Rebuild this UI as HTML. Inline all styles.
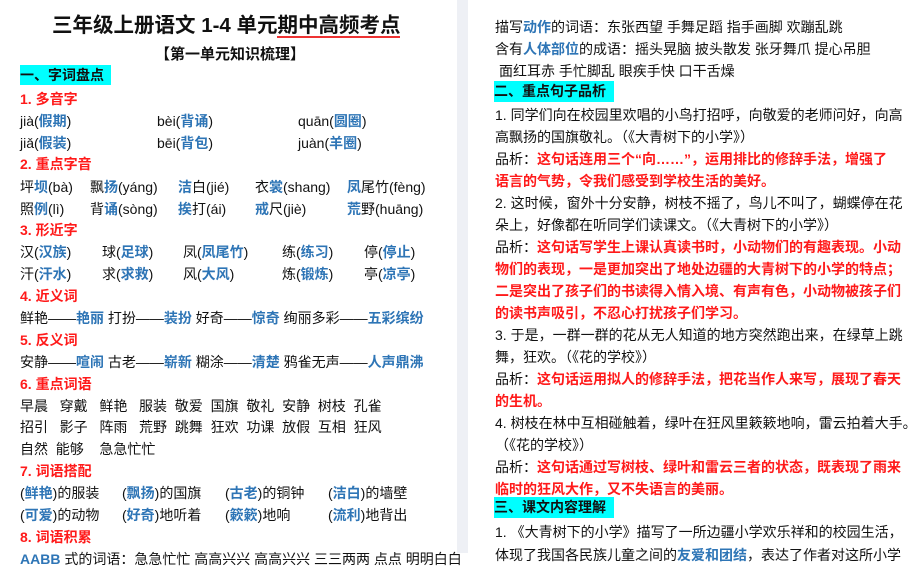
<!DOCTYPE html>
<html><head><meta charset="utf-8"><style>
body{margin:0;width:913px;height:553px;overflow:hidden;background:#fff;font-family:"Liberation Sans","Noto Sans CJK SC",sans-serif;font-size:14px;color:#111;position:relative}
.l{position:absolute;white-space:nowrap;line-height:20px}
.b{color:#2e75b6;font-weight:bold}
.r{color:#ff1a1a;font-weight:bold}
.h{background:#00ffff;font-weight:bold;padding:0 10px 0 0}
.gap{position:absolute;left:457px;top:0;width:11px;height:553px;background:#eef0f5}
</style></head><body>
<div class="gap"></div>
<div class="l" style="left:52px;top:12px;font-size:20.5px;font-weight:bold;line-height:28px">三年级上册语文 1-4 单元期中高频考点</div>
<div style="position:absolute;left:277px;top:36px;width:123px;height:2px;background:#e33"></div>
<div class="l" style="left:155px;top:45px;font-size:15px;font-weight:bold">【第一单元知识梳理】</div>
<div class="l h" style="left:20px;top:65px;width:81px;height:20px">一、字词盘点</div>
<div class="l r" style="left:20px;top:89px">1. 多音字</div>
<div class="l" style="left:20px;top:111px">jià(<span class="b">假期</span>)</div>
<div class="l" style="left:157px;top:111px">bèi(<span class="b">背诵</span>)</div>
<div class="l" style="left:298px;top:111px">quān(<span class="b">圆圈</span>)</div>
<div class="l" style="left:20px;top:133px">jiǎ(<span class="b">假装</span>)</div>
<div class="l" style="left:157px;top:133px">bēi(<span class="b">背包</span>)</div>
<div class="l" style="left:298px;top:133px">juàn(<span class="b">羊圈</span>)</div>
<div class="l r" style="left:20px;top:154px">2. 重点字音</div>
<div class="l" style="left:20px;top:177px">坪<span class="b">坝</span>(bà)</div>
<div class="l" style="left:90px;top:177px">飘<span class="b">扬</span>(yáng)</div>
<div class="l" style="left:178px;top:177px"><span class="b">洁</span>白(jié)</div>
<div class="l" style="left:255px;top:177px">衣<span class="b">裳</span>(shang)</div>
<div class="l" style="left:347px;top:177px"><span class="b">凤</span>尾竹(fèng)</div>
<div class="l" style="left:20px;top:199px">照<span class="b">例</span>(lì)</div>
<div class="l" style="left:90px;top:199px">背<span class="b">诵</span>(sòng)</div>
<div class="l" style="left:178px;top:199px"><span class="b">挨</span>打(ái)</div>
<div class="l" style="left:255px;top:199px"><span class="b">戒</span>尺(jiè)</div>
<div class="l" style="left:347px;top:199px"><span class="b">荒</span>野(huāng)</div>
<div class="l r" style="left:20px;top:220px">3. 形近字</div>
<div class="l" style="left:20px;top:242px">汉(<span class="b">汉族</span>)</div>
<div class="l" style="left:102px;top:242px">球(<span class="b">足球</span>)</div>
<div class="l" style="left:183px;top:242px">凤(<span class="b">凤尾竹</span>)</div>
<div class="l" style="left:282px;top:242px">练(<span class="b">练习</span>)</div>
<div class="l" style="left:364px;top:242px">停(<span class="b">停止</span>)</div>
<div class="l" style="left:20px;top:264px">汗(<span class="b">汗水</span>)</div>
<div class="l" style="left:102px;top:264px">求(<span class="b">求救</span>)</div>
<div class="l" style="left:183px;top:264px">风(<span class="b">大风</span>)</div>
<div class="l" style="left:282px;top:264px">炼(<span class="b">锻炼</span>)</div>
<div class="l" style="left:364px;top:264px">亭(<span class="b">凉亭</span>)</div>
<div class="l r" style="left:20px;top:286px">4. 近义词</div>
<div class="l" style="left:20px;top:308px">鲜艳——<span class="b">艳丽</span> 打扮——<span class="b">装扮</span> 好奇——<span class="b">惊奇</span> 绚丽多彩——<span class="b">五彩缤纷</span></div>
<div class="l r" style="left:20px;top:330px">5. 反义词</div>
<div class="l" style="left:20px;top:352px">安静——<span class="b">喧闹</span> 古老——<span class="b">崭新</span> 糊涂——<span class="b">清楚</span> 鸦雀无声——<span class="b">人声鼎沸</span></div>
<div class="l r" style="left:20px;top:374px">6. 重点词语</div>
<div class="l" style="left:20px;top:396px">早晨&nbsp;&nbsp;&nbsp;穿戴&nbsp;&nbsp;&nbsp;鲜艳&nbsp;&nbsp;&nbsp;服装&nbsp;&nbsp;敬爱&nbsp;&nbsp;国旗&nbsp;&nbsp;敬礼&nbsp;&nbsp;安静&nbsp;&nbsp;树枝&nbsp;&nbsp;孔雀</div>
<div class="l" style="left:20px;top:417px">招引&nbsp;&nbsp;&nbsp;影子&nbsp;&nbsp;&nbsp;阵雨&nbsp;&nbsp;&nbsp;荒野&nbsp;&nbsp;跳舞&nbsp;&nbsp;狂欢&nbsp;&nbsp;功课&nbsp;&nbsp;放假&nbsp;&nbsp;互相&nbsp;&nbsp;狂风</div>
<div class="l" style="left:20px;top:439px">自然&nbsp;&nbsp;能够&nbsp;&nbsp;&nbsp;&nbsp;急急忙忙</div>
<div class="l r" style="left:20px;top:461px">7. 词语搭配</div>
<div class="l" style="left:20px;top:483px">(<span class="b">鲜艳</span>)的服装</div>
<div class="l" style="left:122px;top:483px">(<span class="b">飘扬</span>)的国旗</div>
<div class="l" style="left:225px;top:483px">(<span class="b">古老</span>)的铜钟</div>
<div class="l" style="left:328px;top:483px">(<span class="b">洁白</span>)的墙壁</div>
<div class="l" style="left:20px;top:505px">(<span class="b">可爱</span>)的动物</div>
<div class="l" style="left:122px;top:505px">(<span class="b">好奇</span>)地听着</div>
<div class="l" style="left:225px;top:505px">(<span class="b">簌簌</span>)地响</div>
<div class="l" style="left:328px;top:505px">(<span class="b">流利</span>)地背出</div>
<div class="l r" style="left:20px;top:527px">8. 词语积累</div>
<div class="l" style="left:20px;top:549px"><span class="b">AABB</span> 式的词语：急急忙忙 高高兴兴 高高兴兴 三三两两 点点 明明白白</div>

<div class="l" style="left:495px;top:17px">描写<span class="b">动作</span>的词语：东张西望 手舞足蹈 指手画脚 欢蹦乱跳</div>
<div class="l" style="left:495px;top:39px">含有<span class="b">人体部位</span>的成语：摇头晃脑 披头散发 张牙舞爪 提心吊胆</div>
<div class="l" style="left:499px;top:61px">面红耳赤 手忙脚乱 眼疾手快 口干舌燥</div>
<div class="l h" style="left:494px;top:81px;width:110px;height:21px">二、重点句子品析</div>
<div class="l" style="left:495px;top:105px">1. 同学们向在校园里欢唱的小鸟打招呼，向敬爱的老师问好，向高</div>
<div class="l" style="left:495px;top:127px">高飘扬的国旗敬礼。（《大青树下的小学》）</div>
<div class="l" style="left:495px;top:149px">品析：<span class="r">这句话连用三个“向……”，运用排比的修辞手法，增强了</span></div>
<div class="l r" style="left:495px;top:171px">语言的气势，令我们感受到学校生活的美好。</div>
<div class="l" style="left:495px;top:193px">2. 这时候，窗外十分安静，树枝不摇了，鸟儿不叫了，蝴蝶停在花</div>
<div class="l" style="left:495px;top:215px">朵上，好像都在听同学们读课文。（《大青树下的小学》）</div>
<div class="l" style="left:495px;top:237px">品析：<span class="r">这句话写学生上课认真读书时，小动物们的有趣表现。小动</span></div>
<div class="l r" style="left:495px;top:259px">物们的表现，一是更加突出了地处边疆的大青树下的小学的特点；</div>
<div class="l r" style="left:495px;top:281px">二是突出了孩子们的书读得入情入境、有声有色，小动物被孩子们</div>
<div class="l r" style="left:495px;top:303px">的读书声吸引，不忍心打扰孩子们学习。</div>
<div class="l" style="left:495px;top:325px">3. 于是，一群一群的花从无人知道的地方突然跑出来，在绿草上跳</div>
<div class="l" style="left:495px;top:347px">舞，狂欢。（《花的学校》）</div>
<div class="l" style="left:495px;top:369px">品析：<span class="r">这句话运用拟人的修辞手法，把花当作人来写，展现了春天</span></div>
<div class="l r" style="left:495px;top:391px">的生机。</div>
<div class="l" style="left:495px;top:413px">4. 树枝在林中互相碰触着，绿叶在狂风里簌簌地响，雷云拍着大手。</div>
<div class="l" style="left:495px;top:435px">（《花的学校》）</div>
<div class="l" style="left:495px;top:457px">品析：<span class="r">这句话通过写树枝、绿叶和雷云三者的状态，既表现了雨来</span></div>
<div class="l r" style="left:495px;top:479px">临时的狂风大作，又不失语言的美丽。</div>
<div class="l h" style="left:494px;top:497px;width:110px;height:21px">三、课文内容理解</div>
<div class="l" style="left:495px;top:522px">1. 《大青树下的小学》描写了一所边疆小学欢乐祥和的校园生活，</div>
<div class="l" style="left:495px;top:545px">体现了我国各民族儿童之间的<span class="b">友爱和团结</span>，表达了作者对这所小学</div>
</body></html>
